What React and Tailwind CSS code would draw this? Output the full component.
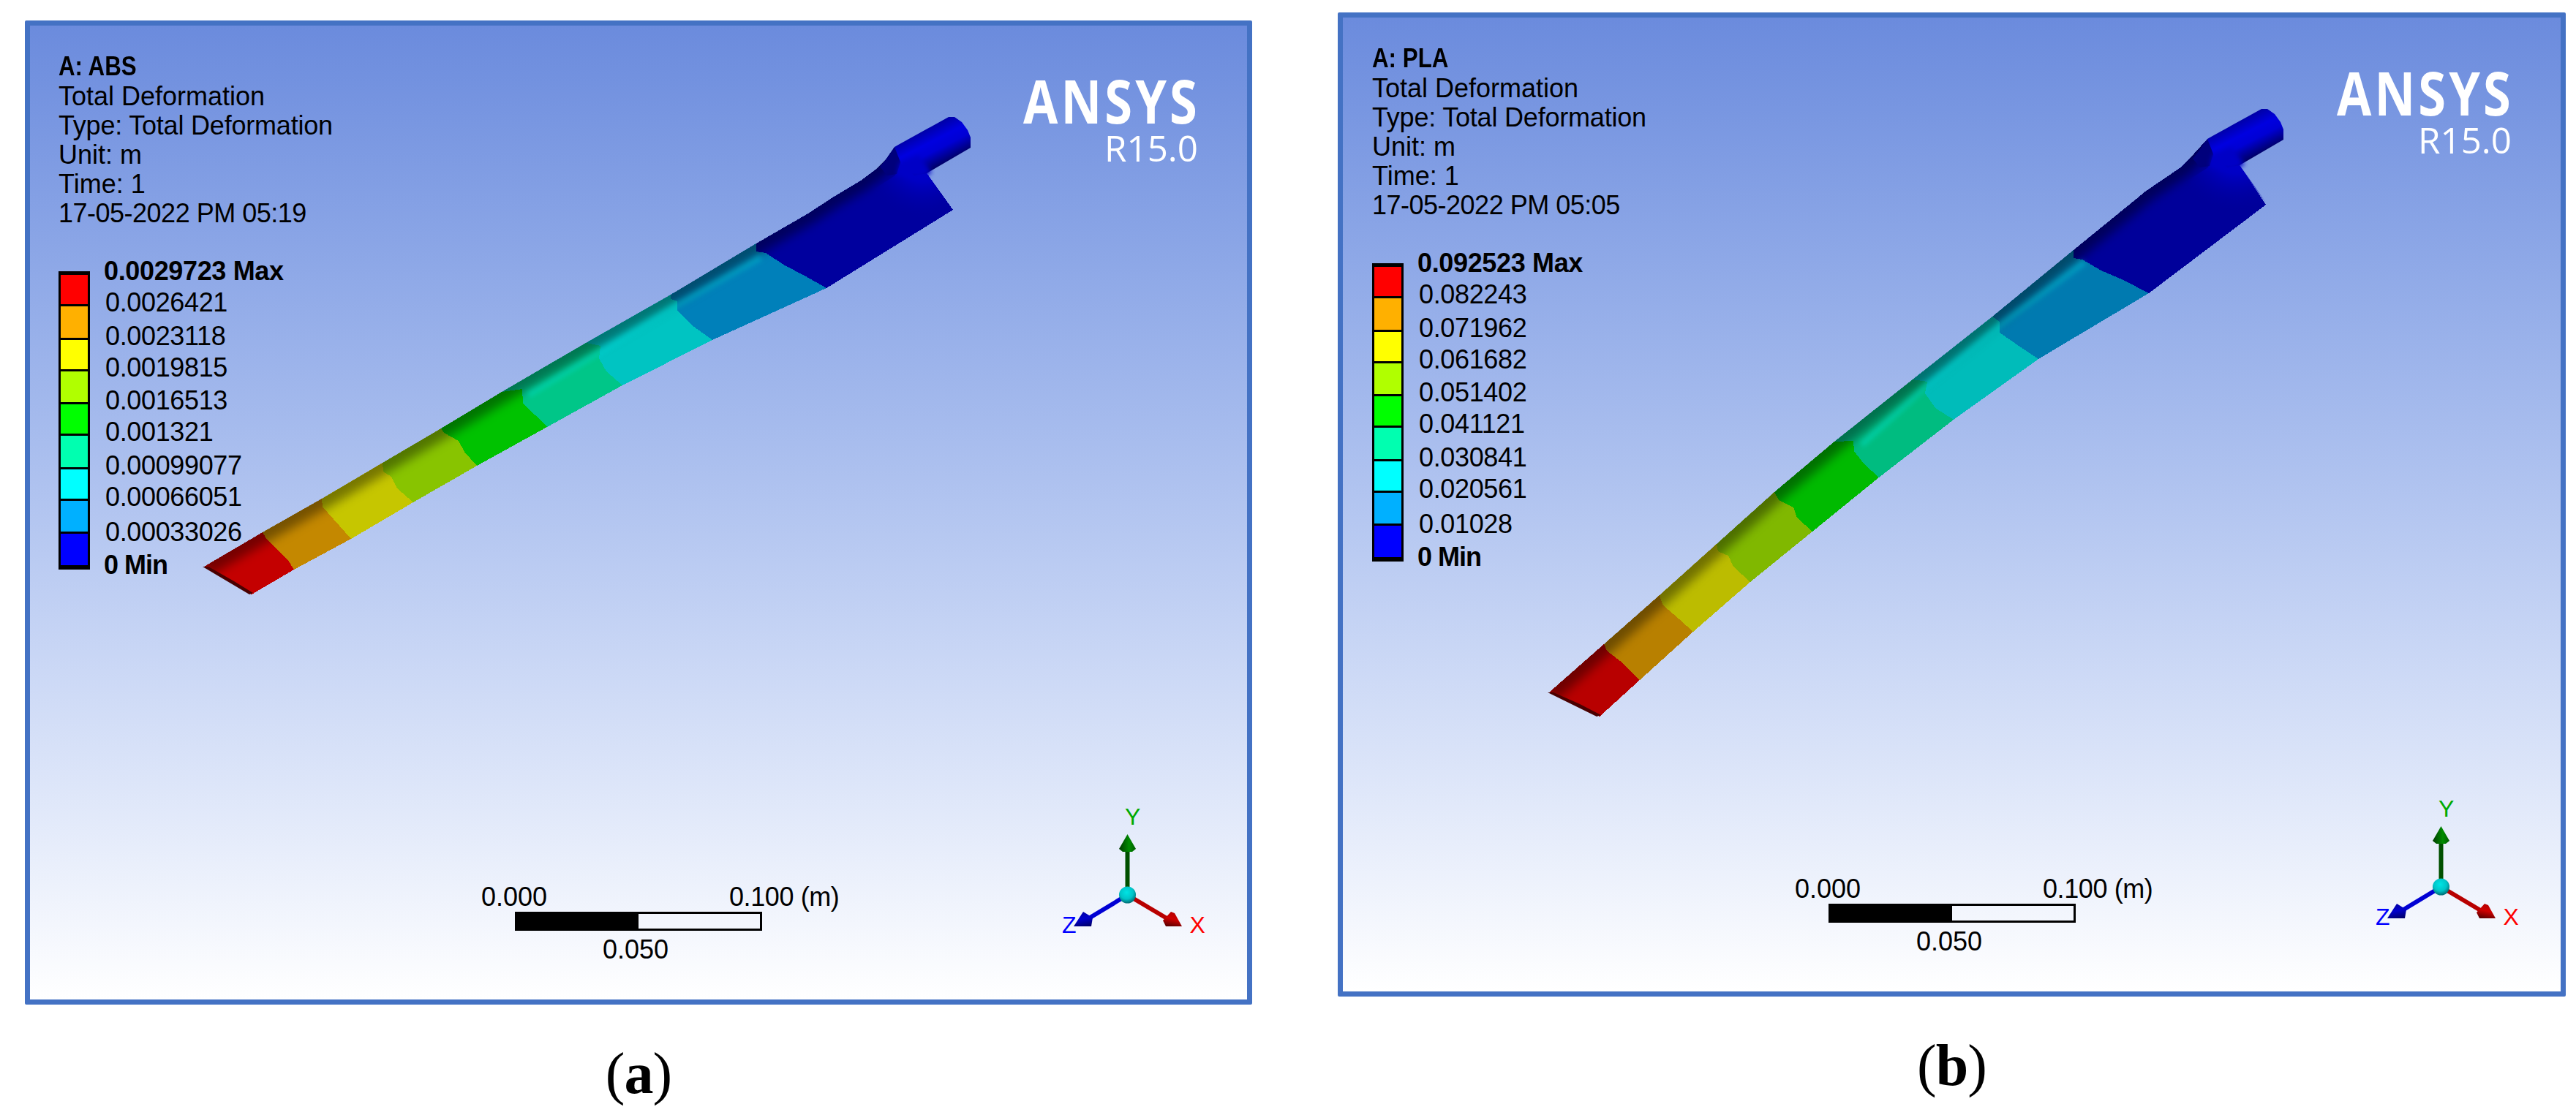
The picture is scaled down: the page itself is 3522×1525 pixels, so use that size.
const LEGEND_COLORS = [
  'h-[43px] bg-[#ff0000]',
  'h-[46px] bg-[#ffb000]',
  'h-[43px] bg-[#ffff00]',
  'h-[45px] bg-[#b0ff00]',
  'h-[43px] bg-[#00ff00]',
  'h-[46px] bg-[#00ffb0]',
  'h-[43px] bg-[#00ffff]',
  'h-[45px] bg-[#00b0ff]',
  'h-[43px] bg-[#0000ff]',
]

// label rows are not evenly spaced in the solver legend
const LABEL_HEIGHTS = [
  'h-[43px]',
  'h-[46px]',
  'h-[43px]',
  'h-[45px]',
  'h-[43px]',
  'h-[46px]',
  'h-[43px]',
  'h-[48px]',
  'h-[45px]',
]

const results = [
  {
    key: 'a',
    title: 'A: ABS',
    date: '17-05-2022 PM 05:19',
    values: [
      '0.0029723 Max',
      '0.0026421',
      '0.0023118',
      '0.0019815',
      '0.0016513',
      '0.001321',
      '0.00099077',
      '0.00066051',
      '0.00033026',
      '0 Min',
    ],
    figure: 'mt-7 ml-[34px] w-[1678px]',
    canvas: 'pl-0',
    viewBox: '41 35 1664 1332',
    rootShift: 'translate(0 0)',
    colors: ['#c40000', '#c48800', '#c6c600', '#88c400', '#00c200', '#00c688', '#00c4c2', '#0080ba', '#00009e'],
    // each cut runs from the leading edge to the trailing edge
    cuts: [
      [[279, 775], [344, 813]],
      [[359, 728], [365, 738], [393, 765], [402, 779]],
      [[440, 682], [441, 693], [456, 710], [480, 737]],
      [[523, 633], [524, 645], [535, 652], [543, 668], [565, 687]],
      [[603, 586], [607, 592], [627, 603], [635, 618], [652, 637]],
      [[686, 536], [714, 532], [715, 552], [732, 568], [748, 584]],
      [[801, 469], [821, 473], [819, 490], [829, 508], [851, 527]],
      [[917, 403], [917, 409], [926, 412], [926, 425], [949, 447], [974, 465]],
      [[1034, 333], [1034, 344], [1047, 346], [1073, 363], [1100, 377], [1130, 394]],
    ],
    root: [[1303, 287], [1267, 237], [1240, 215], [1223, 201], [1212, 217], [1197, 232], [1177, 247], [1137, 271], [1105, 292]],
    ridge: [[722, 540], [822, 480], [926, 417], [1040, 352]],
    tip: '277,775 285,775 320,795 346,811 341,813',
  },
  {
    key: 'b',
    title: 'A: PLA',
    date: '17-05-2022 PM 05:05',
    values: [
      '0.092523 Max',
      '0.082243',
      '0.071962',
      '0.061682',
      '0.051402',
      '0.041121',
      '0.030841',
      '0.020561',
      '0.01028',
      '0 Min',
    ],
    figure: 'mt-[17px] ml-[117px] w-[1679px]',
    canvas: 'pl-px',
    viewBox: '1836 24 1665 1332',
    rootShift: 'translate(1795 -11)',
    colors: ['#b80000', '#b88000', '#bcbc00', '#80b800', '#00ba00', '#00bc80', '#00bcba', '#007ab0', '#00009a'],
    cuts: [
      [[2118, 947], [2187, 980]],
      [[2193, 881], [2197, 890], [2215, 904], [2242, 930]],
      [[2269, 814], [2273, 827], [2296, 847], [2315, 864]],
      [[2347, 744], [2349, 754], [2363, 760], [2370, 775], [2393, 796]],
      [[2426, 673], [2432, 684], [2452, 694], [2457, 708], [2478, 727]],
      [[2508, 604], [2534, 603], [2535, 617], [2549, 635], [2569, 653]],
      [[2615, 519], [2635, 522], [2632, 538], [2646, 558], [2671, 574]],
      [[2724, 433], [2734, 440], [2734, 455], [2763, 475], [2787, 491]],
      [[2835, 342], [2835, 353], [2847, 355], [2873, 370], [2903, 383], [2938, 401]],
    ],
    root: [[3098, 280], [3062, 226], [3035, 204], [3018, 190], [3000, 210], [2983, 228], [2933, 262], [2921, 272]],
    ridge: [[2545, 608], [2637, 525], [2739, 441], [2850, 358]],
    tip: '2116,947 2124,947 2160,963 2189,978 2183,980',
  },
]

const toPoints = (list) => list.map((p) => p.join(',')).join(' ')

function Blade({ data }) {
  const { key, cuts, colors, root, ridge } = data
  const last = cuts[cuts.length - 1]
  const bands = cuts.slice(0, -1).map((cut, i) => [...cut, ...[...cuts[i + 1]].reverse()])
  const rootBand = [...last, ...root]
  const topEdge = [...cuts.map((c) => c[0]), ...[...root].slice(3).reverse()]
  const outline = [...cuts.map((c) => c[c.length - 1]), ...root, ...[...cuts].reverse().map((c) => c[0])]

  return (
    <svg className="absolute inset-0 h-full w-full" viewBox={data.viewBox} preserveAspectRatio="none">
      <defs>
        <clipPath id={`outline-${key}`}>
          <polygon points={toPoints(outline)} />
        </clipPath>
        <filter id={`soft-${key}`} x="-10%" y="-10%" width="120%" height="120%">
          <feGaussianBlur stdDeviation="7" />
        </filter>
        <filter id={`fine-${key}`} x="-10%" y="-10%" width="120%" height="120%">
          <feGaussianBlur stdDeviation="3" />
        </filter>
        <linearGradient id={`shaft-${key}`} gradientUnits="userSpaceOnUse" x1="1260" y1="180" x2="1284" y2="227">
          <stop offset="0" stopColor="#0000a8" />
          <stop offset="0.35" stopColor="#0000e0" />
          <stop offset="0.6" stopColor="#0000d4" />
          <stop offset="1" stopColor="#000068" />
        </linearGradient>
        <radialGradient id={`fillet-${key}`} gradientUnits="userSpaceOnUse" cx="1262" cy="215" r="84">
          <stop offset="0" stopColor="#0000d8" />
          <stop offset="0.4" stopColor="#0000c4" />
          <stop offset="1" stopColor="#0000a0" stopOpacity="0" />
        </radialGradient>
      </defs>

      <g shapeRendering="crispEdges">
        {bands.map((band, i) => (
          <polygon key={i} points={toPoints(band)} fill={colors[i]} />
        ))}
        <polygon points={toPoints(rootBand)} fill={colors[8]} />
      </g>

      <g clipPath={`url(#outline-${key})`}>
        <polyline
          points={toPoints(topEdge)}
          fill="none"
          stroke="#000"
          strokeOpacity="0.4"
          strokeWidth="30"
          filter={`url(#soft-${key})`}
        />
        <polyline
          points={toPoints(ridge)}
          fill="none"
          stroke="#00ffff"
          strokeOpacity="0.25"
          strokeWidth="9"
          filter={`url(#fine-${key})`}
        />
      </g>
      <polygon points={data.tip} fill="#4a0000" />

      {/* mounting shaft */}
      <g transform={data.rootShift}>
        <polygon points="1230,214 1267,237 1303,287 1250,318 1190,262 1224,240" fill={`url(#fillet-${key})`} />
        <path d="M1223 201 L1233 216 L1226 238 L1213 240 L1203 228 L1212 217 Z" fill="#00007c" />
        <path
          d="M1223 201 L1230 197 L1297 160 L1305 160 L1315 167 L1323 178 L1327 188 L1327 202 L1267 237 L1250 240 L1232 224 Z"
          fill={`url(#shaft-${key})`}
        />
        <path d="M1230 222 L1256 212 L1274 236 L1258 244 L1226 240 Z" fill="#0000c6" filter={`url(#fine-${key})`} />
      </g>
    </svg>
  )
}

function Logo() {
  return (
    <svg className="mt-[70px] mr-[66px] h-[124px] w-[244px] overflow-visible" viewBox="0 0 244 124">
      <g fill="#fff" fontFamily="'Open Sans', 'Noto Sans', sans-serif">
        <text
          x="4"
          y="63.500"
          fontSize="82.500"
          fontWeight="700"
          letterSpacing="5"
          textLength="242"
          lengthAdjust="spacingAndGlyphs"
        >
          ANSYS
        </text>
        <text x="115" y="115.500" fontSize="50" textLength="128" lengthAdjust="spacingAndGlyphs">
          R15.0
        </text>
      </g>
    </svg>
  )
}

function Legend({ values }) {
  return (
    <div className="mt-[39px] flex">
      <div className="mt-[20px] flex h-[408px] w-[43px] flex-col border-x-3 border-t-5 border-b-6 border-black">
        {LEGEND_COLORS.map((color, i) => (
          <div key={color} className={`${color} shrink-0 ${i < 8 ? 'border-b-[3px] border-black' : ''}`} />
        ))}
      </div>
      <div className="ml-[19px] whitespace-nowrap tracking-[-0.35px]">
        {values.map((value, i) => (
          <div
            key={value}
            className={`${LABEL_HEIGHTS[i] || 'h-10'} ${i === 0 || i === 9 ? 'font-bold' : 'pl-[2px]'} ${i === 9 ? 'tracking-[-1px]' : ''}`}
          >
            {value}
          </div>
        ))}
      </div>
    </div>
  )
}

function ScaleBar() {
  return (
    <div className="mb-[48px] ml-[617px] w-[500px]">
      <div className="flex whitespace-nowrap">
        <span className="w-[339px]">0.000</span>
        <span className="tracking-[-0.4px]">0.100 (m)</span>
      </div>
      <div className="ml-[46px] flex h-[26px] w-[338px] border-[3px] border-black">
        <div className="w-[166px] bg-black" />
      </div>
      <div className="mt-[6px] ml-[166px]">0.050</div>
    </div>
  )
}

function Triad() {
  return (
    <svg className="mr-[50px] mb-[87px] h-[180px] w-[210px] overflow-visible" viewBox="1445 1100 210 180">
      <defs>
        <radialGradient id="hub" cx="0.45" cy="0.35" r="0.65">
          <stop offset="0" stopColor="#00e4e4" />
          <stop offset="0.6" stopColor="#00c4c8" />
          <stop offset="1" stopColor="#006c74" />
        </radialGradient>
        <linearGradient id="coneY">
          <stop offset="0" stopColor="#003c00" />
          <stop offset="0.6" stopColor="#008c00" />
          <stop offset="1" stopColor="#005c00" />
        </linearGradient>
        <linearGradient id="coneX" x1="0.7" y1="0" x2="0.4" y2="1">
          <stop offset="0" stopColor="#b00000" />
          <stop offset="0.5" stopColor="#d00000" />
          <stop offset="1" stopColor="#600000" />
        </linearGradient>
        <linearGradient id="coneZ" x1="0.3" y1="0" x2="0.6" y2="1">
          <stop offset="0" stopColor="#0000a0" />
          <stop offset="0.5" stopColor="#0000cc" />
          <stop offset="1" stopColor="#000070" />
        </linearGradient>
      </defs>
      <path d="M1541.500 1224 V1162" stroke="#005000" strokeWidth="6" />
      <path d="M1541.500 1141 L1553 1161 L1548 1165 H1535 L1530 1161 Z" fill="url(#coneY)" />
      <path d="M1541.500 1224 L1597 1257" stroke="#b80000" strokeWidth="6" />
      <path d="M1601 1247 L1606 1249 L1616 1267 H1594 L1590 1259 Z" fill="url(#coneX)" />
      <path d="M1541.500 1224 L1487 1257" stroke="#0000d4" strokeWidth="6" />
      <path d="M1481 1247 L1494 1255 L1492 1267 H1468 Z" fill="url(#coneZ)" />
      <circle cx="1541.500" cy="1224" r="11.500" fill="url(#hub)" />
      <g fontFamily="'Liberation Sans', Arial, sans-serif" fontSize="32">
        <text x="1538" y="1127.500" fill="#00aa00">Y</text>
        <text x="1626.500" y="1276" fill="#ff0000">X</text>
        <text x="1452" y="1276" fill="#0000ff">Z</text>
      </g>
    </svg>
  )
}

function ResultFigure({ data }) {
  return (
    <figure className={`${data.figure} flex shrink-0 flex-col items-center`}>
      <div
        className={`relative flex h-[1346px] w-full flex-col justify-between rounded-[2px] border-[7px] border-[#4472c4] bg-linear-to-b from-[#6b8bdd] to-white ${data.canvas}`}
      >
        <div className="flex items-start justify-between">
          <div className="pt-[36px] pl-[39px]">
            <div className="whitespace-nowrap">
              <div className="mb-px origin-left scale-x-[0.87] font-bold">{data.title}</div>
              <div>Total Deformation</div>
              <div className="tracking-[-0.2px]">Type: Total Deformation</div>
              <div>Unit: m</div>
              <div>Time: 1</div>
              <div className="tracking-[-0.5px]">{data.date}</div>
            </div>
            <Legend values={data.values} />
          </div>
          <Logo />
        </div>
        <div className="flex items-end justify-between">
          <ScaleBar />
          <Triad />
        </div>
        <Blade data={data} />
      </div>
      <figcaption className="mt-[54px] font-['Liberation_Serif',serif] text-[80px] leading-none tracking-[-1px]">
        (<b>{data.key}</b>)
      </figcaption>
    </figure>
  )
}

export default function App() {
  return (
    <main className="flex h-[1525px] w-[3522px] items-start overflow-hidden bg-white font-['Liberation_Sans',Arial,sans-serif] text-[36px] leading-[40px] text-black">
      {results.map((data) => (
        <ResultFigure key={data.key} data={data} />
      ))}
    </main>
  )
}
